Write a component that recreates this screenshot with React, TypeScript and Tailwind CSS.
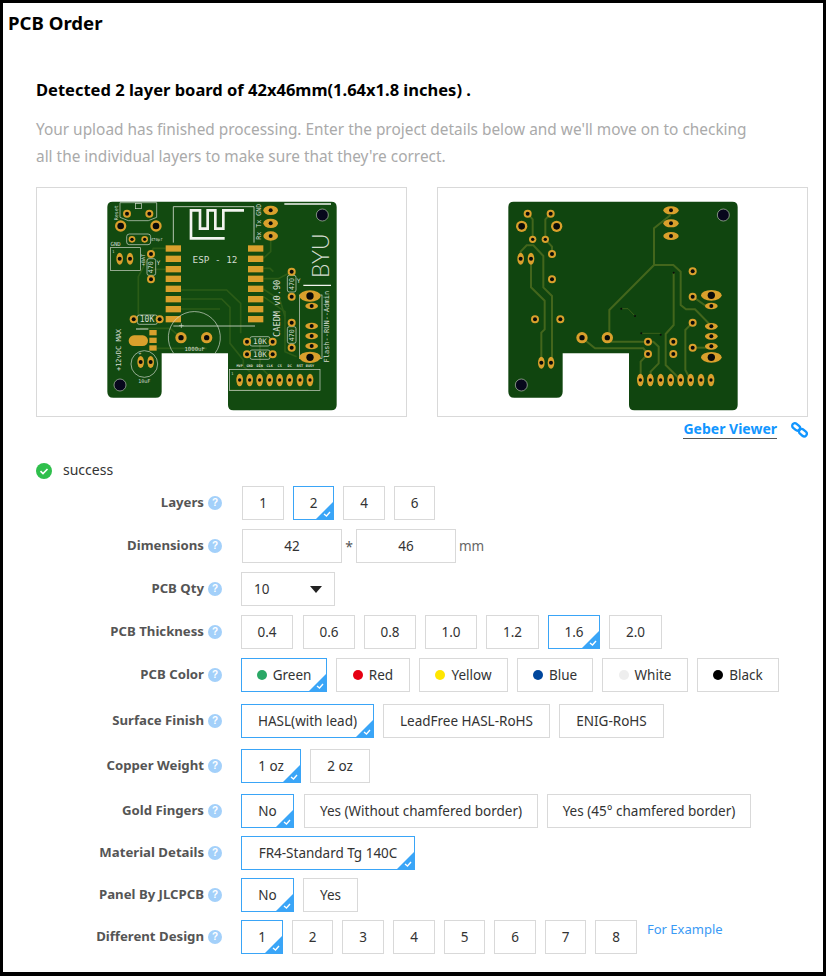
import React from "react";

const GOLD = "#d9a02c";
const SILK = "#d5dcd0";
const FONT = "font-['Noto_Sans',sans-serif]";

const Pad = ({ x, y, r = 12, h = 6 }: { x: number; y: number; r?: number; h?: number }) => (
  <g>
    <circle cx={x} cy={y} r={r} fill={GOLD} />
    <circle cx={x} cy={y} r={h} fill="#0a0a0a" />
  </g>
);

const Oval = ({ x, y, rx, ry, h = 6 }: { x: number; y: number; rx: number; ry: number; h?: number }) => (
  <g>
    <ellipse cx={x} cy={y} rx={rx} ry={ry} fill={GOLD} />
    <ellipse cx={x} cy={y} rx={h} ry={h} fill="#0a0a0a" />
  </g>
);

const Hole = ({ x, y }: { x: number; y: number }) => (
  <circle cx={x} cy={y} r={18} fill="#07071c" stroke="#b9c4b4" strokeWidth={2} />
);

const Silk = ({ x, y, s = 16, rot, children, w }: { x: number; y: number; s?: number; rot?: number; children: string; w?: number }) => (
  <text
    x={x}
    y={y}
    fontSize={s}
    fontFamily="'DejaVu Sans Mono', monospace"
    fontWeight={w}
    fill={SILK}
    textAnchor="middle"
    transform={rot ? `rotate(${rot} ${x} ${y})` : undefined}
  >
    {children}
  </text>
);

const espY = [196, 227, 258, 287, 317, 348, 378, 408];
const connX = [629, 659, 689, 719, 749, 779, 810, 840];
const connLabels = ["MVP", "GND", "DIN", "CLK", "CS", "DC", "RST", "BUSY"];

function TopBoard() {
  return (
    <svg viewBox="21 24 1107 684" className="block w-full h-full">
      <path
        d="M232 81Q232 65 248 65H904Q920 65 920 81V675Q920 691 904 691H610Q594 691 594 675V520H395V635Q395 653 377 653H250Q232 653 232 635Z"
        fill="#124a10"
      />
      {/* traces */}
      <g fill="none" stroke="#2b5c17" strokeWidth={5}>
        <path d="M453 330H590L632 370V460" />
        <path d="M453 357H575L600 382V490L640 540V560L660 575" />
        <path d="M453 387H570" />
        <path d="M407 205H370L325 290V410" />
        <path d="M407 268H370" />
        <path d="M700 235L722 215V175" />
        <path d="M700 265H720L730 275" />
        <path d="M700 296H745L785 275" />
        <path d="M700 350L765 395V515L800 530" />
        <path d="M700 327L750 360L765 410" />
        <path d="M330 445H420L453 473" />
        <path d="M380 505H530" />
        <path d="M690 470V560L720 590" />
        <path d="M835 630H600" />
      </g>
      {/* ESP module */}
      <path d="M430 188V80H672V188" fill="none" stroke={SILK} strokeWidth={2.5} />
      <path d="M642 91H580V146H556V91H533V146H510V91H483V175H584" fill="none" stroke="#f2f4ef" strokeWidth={8} />
      {espY.map((y) => (
        <g key={y}>
          <rect x={407} y={y} width={46} height={19} fill={GOLD} />
          <rect x={654} y={y} width={46} height={19} fill={GOLD} />
        </g>
      ))}
      <Silk x={555} y={248} s={28}>ESP - 12</Silk>
      {/* switch */}
      <path d="M270 68H380V112L355 122H295L270 112Z" fill="none" stroke={SILK} strokeWidth={2} />
      <rect x={316} y={70} width={18} height={16} fill="none" stroke={SILK} strokeWidth={2} />
      <Pad x={291} y={101} />
      <Pad x={358} y={101} />
      <Pad x={272} y={138} r={17} h={10} />
      <Pad x={378} y={138} r={17} h={10} />
      <Silk x={263} y={98} s={15} rot={-90}>Reset</Silk>
      {/* 470pf */}
      <rect x={290} y={162} width={72} height={32} rx={8} fill="none" stroke={SILK} strokeWidth={2} />
      <Pad x={306} y={178} r={10} h={5} />
      <Pad x={344} y={178} r={10} h={5} />
      <Silk x={380} y={182} s={12}>470pf</Silk>
      {/* battery */}
      <Silk x={257} y={197} s={17}>GND</Silk>
      <rect x={241} y={203} width={90} height={68} fill="none" stroke={SILK} strokeWidth={2} />
      <Silk x={250} y={220} s={11}>1</Silk>
      <Oval x={269} y={236} rx={10} ry={18} />
      <Oval x={300} y={236} rx={10} ry={18} />
      <Silk x={345} y={240} s={15} rot={-90}>+BAT</Silk>
      {/* 470 left */}
      <rect x={351} y={236} width={26} height={50} rx={6} fill="none" stroke={SILK} strokeWidth={2} />
      <Pad x={363} y={222} />
      <Pad x={363} y={298} />
      <Silk x={370} y={262} s={20} rot={-90}>470</Silk>
      <Silk x={385} y={254} s={19}>Y</Silk>
      {/* 10K */}
      <rect x={322} y={405} width={60} height={28} rx={6} fill="none" stroke={SILK} strokeWidth={2} />
      <Pad x={311} y={418} />
      <Pad x={389} y={418} />
      <Silk x={351} y={427} s={24}>10K</Silk>
      {/* crystal + regulator */}
      <path d="M318 447H355" stroke={SILK} strokeWidth={3} />
      <rect x={296} y={466} width={58} height={32} rx={16} fill={GOLD} />
      <rect x={358} y={450} width={22} height={16} fill={GOLD} />
      <rect x={358} y={473} width={22} height={16} fill={GOLD} />
      <rect x={358} y={496} width={22} height={16} fill={GOLD} />
      {/* big cap */}
      <path d="M431 520A78 78 0 1 1 555 520" fill="none" stroke={SILK} strokeWidth={2} />
      <path d="M430 438H675" stroke={SILK} strokeWidth={2.5} />
      <path d="M447 437H461M454 430V444" stroke={SILK} strokeWidth={2} />
      <Pad x={453} y={473} r={17} h={8} />
      <Pad x={530} y={473} r={17} h={8} />
      <Silk x={494} y={514} s={17}>1000uF</Silk>
      {/* small cap */}
      <circle cx={343} cy={552} r={40} fill="none" stroke={SILK} strokeWidth={2} />
      <Silk x={330} y={526} s={14}>+</Silk>
      <Oval x={332} y={546} rx={10} ry={18} />
      <Oval x={362} y={546} rx={10} ry={18} />
      <Silk x={343} y={608} s={15}>10uF</Silk>
      <Silk x={272} y={510} s={21} rot={-90}>+12vDC MAX</Silk>
      <Hole x={270} y={615} />
      <Hole x={877} y={105} />
      {/* header */}
      <Oval x={722} y={91} rx={22} ry={14} />
      <Oval x={722} y={130} rx={22} ry={14} />
      <Oval x={722} y={168} rx={22} ry={14} />
      <Silk x={692} y={125} s={20} rot={-90}>Rx Tx GND</Silk>
      {/* right side */}
      <path d="M763 72H903M820 316H903" stroke="#f2f4ef" strokeWidth={4} />
      <text x={897} y={295} fontSize={70} fontFamily="Lato, sans-serif" fontWeight={300} fill={SILK} transform="rotate(-90 897 295)">BYU</text>
      <rect x={772} y={286} width={26} height={50} rx={6} fill="none" stroke={SILK} strokeWidth={2} />
      <Pad x={785} y={275} />
      <Pad x={785} y={350} />
      <Silk x={792} y={312} s={20} rot={-90}>470</Silk>
      <Silk x={806} y={310} s={19}>Y</Silk>
      <Silk x={749} y={385} s={26} rot={-90}>CAEDM v0.90</Silk>
      <rect x={772} y={440} width={26} height={50} rx={6} fill="none" stroke={SILK} strokeWidth={2} />
      <Pad x={785} y={428} />
      <Pad x={785} y={503} />
      <Silk x={792} y={466} s={20} rot={-90}>470</Silk>
      <rect x={808} y={345} width={68} height={190} fill="none" stroke={SILK} strokeWidth={2} />
      <Oval x={840} y={348} rx={32} ry={17} h={11} />
      <Oval x={845} y={378} rx={19} ry={10} />
      <Oval x={845} y={438} rx={19} ry={10} />
      <Oval x={845} y={468} rx={19} ry={10} />
      <Oval x={845} y={498} rx={19} ry={10} />
      <Oval x={840} y={532} rx={32} ry={17} h={11} />
      <Silk x={896} y={440} s={21} rot={-90}>Flash--RUN--Admin</Silk>
      {/* pull ups */}
      <rect x={660} y={470} width={60} height={28} rx={6} fill="none" stroke={SILK} strokeWidth={2} />
      <rect x={660} y={510} width={60} height={28} rx={6} fill="none" stroke={SILK} strokeWidth={2} />
      <Pad x={651} y={485} />
      <Pad x={728} y={485} />
      <Pad x={651} y={523} />
      <Pad x={728} y={523} />
      <Silk x={690} y={493} s={23}>10K</Silk>
      <Silk x={690} y={532} s={23}>10K</Silk>
      {/* bottom connector */}
      {connX.map((x, i) => (
        <Silk key={x} x={x} y={560} s={10.5} w={700}>{connLabels[i]}</Silk>
      ))}
      <rect x={598} y={568} width={272} height={63} fill="none" stroke={SILK} strokeWidth={2} />
      <Silk x={607} y={584} s={11}>1</Silk>
      {connX.map((x) => (
        <Oval key={x} x={x} y={600} rx={10} ry={19} h={5} />
      ))}
    </svg>
  );
}

function BottomBoard() {
  return (
    <svg viewBox="24 24 1107 684" className="block w-full h-full">
      <path
        d="M235 81Q235 65 251 65H907Q923 65 923 81V675Q923 691 907 691H613Q597 691 597 675V520H398V635Q398 653 380 653H253Q235 653 235 635Z"
        fill="#10450f"
      />
      <g fill="none" stroke="#43661c" strokeWidth={6}>
        <path d="M722 105L672 145V255L538 390V473" />
        <path d="M672 255H730L752 275V375L768 388H795L844 438" />
        <path d="M293 101L308 118V178" />
        <path d="M362 101L346 118V178" />
        <path d="M346 178L366 200V222" />
        <path d="M272 236V215L290 196H310L340 228V322L366 348V550" />
        <path d="M303 236V322L344 362V448L334 458V548" />
        <path d="M456 473L495 505H640L654 522" />
        <path d="M532 485H670L686 500V550L662 575V600" />
        <path d="M654 522L632 545V600" />
        <path d="M731 278V435L707 462V555L752 600" />
        <path d="M788 428L766 450V570L782 600" />
        <path d="M788 350L828 378H845" />
        <path d="M788 503H845" />
      </g>
      <g fill="none" stroke="#43661c" strokeWidth={2.5}>
        <path d="M574 386H594L615 408" />
        <path d="M634 460H692" />
      </g>
      {[[574, 386], [615, 408], [634, 460], [692, 464], [731, 278]].map(([x, y]) => (
        <circle key={x} cx={x} cy={y} r={3} fill="#0a0a0a" />
      ))}
      <Pad x={293} y={101} />
      <Pad x={362} y={101} />
      <Pad x={275} y={139} r={17} h={10} />
      <Pad x={380} y={139} r={17} h={10} />
      <Pad x={308} y={178} r={11} h={5} />
      <Pad x={346} y={178} r={11} h={5} />
      <Pad x={366} y={222} />
      <Pad x={366} y={298} />
      <Oval x={272} y={236} rx={10} ry={18} />
      <Oval x={303} y={236} rx={10} ry={18} />
      <Pad x={315} y={418} />
      <Pad x={391} y={418} />
      <Oval x={334} y={548} rx={10} ry={18} />
      <Oval x={363} y={548} rx={10} ry={18} />
      <Pad x={456} y={473} r={17} h={8} />
      <Pad x={532} y={473} r={17} h={8} />
      <Pad x={654} y={485} />
      <Pad x={654} y={522} />
      <Pad x={730} y={485} />
      <Pad x={730} y={522} />
      <Oval x={723} y={91} rx={23} ry={12} />
      <Oval x={723} y={130} rx={23} ry={12} />
      <Oval x={723} y={168} rx={23} ry={12} />
      <Pad x={788} y={274} />
      <Pad x={788} y={350} />
      <Pad x={788} y={428} />
      <Pad x={788} y={503} />
      <Oval x={844} y={346} rx={31} ry={16} h={11} />
      <Oval x={844} y={378} rx={19} ry={10} />
      <Oval x={844} y={439} rx={19} ry={10} />
      <Oval x={844} y={469} rx={19} ry={10} />
      <Oval x={844} y={499} rx={19} ry={10} />
      <Oval x={844} y={532} rx={31} ry={16} h={11} />
      {[631, 661, 692, 722, 752, 782, 813, 843].map((x) => (
        <Oval key={x} x={x} y={600} rx={10} ry={19} h={5} />
      ))}
      <Hole x={274} y={615} />
      <Hole x={880} y={105} />
    </svg>
  );
}

const Help = () => (
  <span className="w-[14px] h-[14px] rounded-full bg-[#a3d0fa] text-white text-[10px] font-bold leading-[14px] text-center shrink-0 font-['Liberation_Sans',sans-serif]">
    ?
  </span>
);

const Corner = () => (
  <svg viewBox="0 0 17 17" className="absolute right-0 bottom-0 w-[17px] h-[17px]">
    <path d="M17 0V17H0Z" fill="#3aa5f7" />
    <path d="M8 12L10.5 14L14 10" fill="none" stroke="#fff" strokeWidth={1.4} />
  </svg>
);

const Opt = ({ label, w, on, dot }: { label: string; w: string; on?: boolean; dot?: string }) => (
  <div
    className={`relative h-[34px] ${w} border flex items-center justify-center gap-[6px] text-[13.5px] text-[#333] bg-white ${
      on ? "border-[#3aa5f7]" : "border-[#d9d9d9]"
    }`}
  >
    {dot && <span className="w-[10px] h-[10px] rounded-full" style={{ background: dot }} />}
    {label}
    {on && <Corner />}
  </div>
);

const Row = ({ label, mt, children }: { label: string; mt: string; children: React.ReactNode }) => (
  <div className={`flex items-center ${mt}`}>
    <div className="w-[219px] flex items-center justify-end gap-[4px] text-[13.2px] font-bold text-[#555]">
      {label}
      <Help />
    </div>
    <div className="ml-[19px] flex items-center gap-[9px]">{children}</div>
  </div>
);

export default function App() {
  return (
    <div className={`w-[826px] h-[976px] bg-white border-[#000] border-t-[3px] border-x-[3px] border-b-[4px] overflow-hidden ${FONT}`}>
      <h1 className="h-[40px] pl-[5px] flex items-center text-[18.6px] font-bold text-black">PCB Order</h1>
      <div className="pl-[33px]">
        <h2 className="mt-[34px] h-[26px] flex items-center text-[16.5px] font-bold text-black">
          Detected 2 layer board of 42x46mm(1.64x1.8 inches) .
        </h2>
        <p className="mt-[13px] w-[760px] text-[15.4px] leading-[27px] text-[#aaaaaa]">
          Your upload has finished processing. Enter the project details below and we'll move on to checking
          <br />
          all the individual layers to make sure that they're correct.
        </p>
        <div className="mt-[17px] flex gap-[30px]">
          <div className="w-[371px] h-[230px] border border-[#d9d9d9]">
            <TopBoard />
          </div>
          <div className="w-[371px] h-[230px] border border-[#d9d9d9]">
            <BottomBoard />
          </div>
        </div>
        <div className="mt-[2px] h-[20px] w-[772px] flex items-center justify-end">
          <span className="text-[14px] font-bold text-[#1296ff] leading-[18px] border-b border-[#555]">Geber Viewer</span>
          <svg viewBox="0 0 16 16" className="ml-[14px] w-[17px] h-[17px]" fill="none" stroke="#1296ff" strokeWidth={2.2}>
            <rect x="0.8" y="3" width="8" height="5" rx="2.5" transform="rotate(40 4.8 5.5)" />
            <rect x="7.2" y="8.5" width="8" height="5" rx="2.5" transform="rotate(40 11.2 11)" />
          </svg>
        </div>
        <div className="mt-[20px] h-[20px] flex items-center gap-[11px] text-[14px] text-[#333]">
          <svg viewBox="0 0 16 16" className="mt-[4px] w-[16px] h-[16px]">
            <circle cx="8" cy="8" r="8" fill="#2fbf4c" />
            <path d="M4.5 8.2L7 10.6L11.5 6" fill="none" stroke="#fff" strokeWidth={1.6} />
          </svg>
          success
        </div>
      </div>

      <Row label="Layers" mt="mt-[7px]">
        <Opt label="1" w="w-[42px] ml-[1px]" />
        <Opt label="2" w="w-[41px]" on />
        <Opt label="4" w="w-[42px]" />
        <Opt label="6" w="w-[41px]" />
      </Row>
      <Row label="Dimensions" mt="mt-[9px]">
        <div className="ml-[1px] h-[34px] w-[100px] border border-[#d9d9d9] flex items-center justify-center text-[13.5px] text-[#333]">42</div>
        <span className="mx-[-8px] w-[12px] text-center text-[14px] text-[#555]">*</span>
        <div className="h-[34px] w-[100px] border border-[#d9d9d9] flex items-center justify-center text-[13.5px] text-[#333]">46</div>
        <span className="ml-[-6px] text-[13.5px] text-[#666]">mm</span>
      </Row>
      <Row label="PCB Qty" mt="mt-[9px]">
        <div className="h-[34px] w-[94px] border border-[#d9d9d9] flex items-center justify-between pl-[12px] pr-[12px] text-[13.5px] text-[#333]">
          10
          <span className="w-0 h-0 border-x-[6px] border-x-transparent border-t-[7px] border-t-[#222]" />
        </div>
      </Row>
      <Row label="PCB Thickness" mt="mt-[9px]">
        <Opt label="0.4" w="w-[52px]" />
        <Opt label="0.6" w="w-[52px] ml-[1px]" />
        <Opt label="0.8" w="w-[52px]" />
        <Opt label="1.0" w="w-[52px]" />
        <Opt label="1.2" w="w-[53px]" />
        <Opt label="1.6" w="w-[52px]" on />
        <Opt label="2.0" w="w-[53px]" />
      </Row>
      <Row label="PCB Color" mt="mt-[9px]">
        <Opt label="Green" w="w-[86px]" on dot="#2aa866" />
        <Opt label="Red" w="w-[74px]" dot="#e60012" />
        <Opt label="Yellow" w="w-[89px]" dot="#ffe600" />
        <Opt label="Blue" w="w-[76px]" dot="#00479d" />
        <Opt label="White" w="w-[86px]" dot="#eeeeee" />
        <Opt label="Black" w="w-[82px]" dot="#000000" />
      </Row>
      <Row label="Surface Finish" mt="mt-[12px]">
        <Opt label="HASL(with lead)" w="w-[133px]" on />
        <Opt label="LeadFree HASL-RoHS" w="w-[167px]" />
        <Opt label="ENIG-RoHS" w="w-[105px]" />
      </Row>
      <Row label="Copper Weight" mt="mt-[11px]">
        <Opt label="1 oz" w="w-[60px]" on />
        <Opt label="2 oz" w="w-[60px]" />
      </Row>
      <Row label="Gold Fingers" mt="mt-[11px]">
        <Opt label="No" w="w-[53px]" on />
        <Opt label="Yes (Without chamfered border)" w="w-[234px] ml-[1px]" />
        <Opt label="Yes (45° chamfered border)" w="w-[204px]" />
      </Row>
      <Row label="Material Details" mt="mt-[8px]">
        <Opt label="FR4-Standard Tg 140C" w="w-[174px]" on />
      </Row>
      <Row label="Panel By JLCPCB" mt="mt-[8px]">
        <Opt label="No" w="w-[53px]" on />
        <Opt label="Yes" w="w-[55px]" />
      </Row>
      <Row label="Different Design" mt="mt-[8px]">
        <Opt label="1" w="w-[42px]" on />
        <Opt label="2" w="w-[41px]" />
        <Opt label="3" w="w-[42px]" />
        <Opt label="4" w="w-[42px]" />
        <Opt label="5" w="w-[41px]" />
        <Opt label="6" w="w-[42px]" />
        <Opt label="7" w="w-[41px]" />
        <Opt label="8" w="w-[42px]" />
        <span className="ml-[1px] mb-[14px] text-[13px] text-[#3a9af5]">For Example</span>
      </Row>
    </div>
  );
}
